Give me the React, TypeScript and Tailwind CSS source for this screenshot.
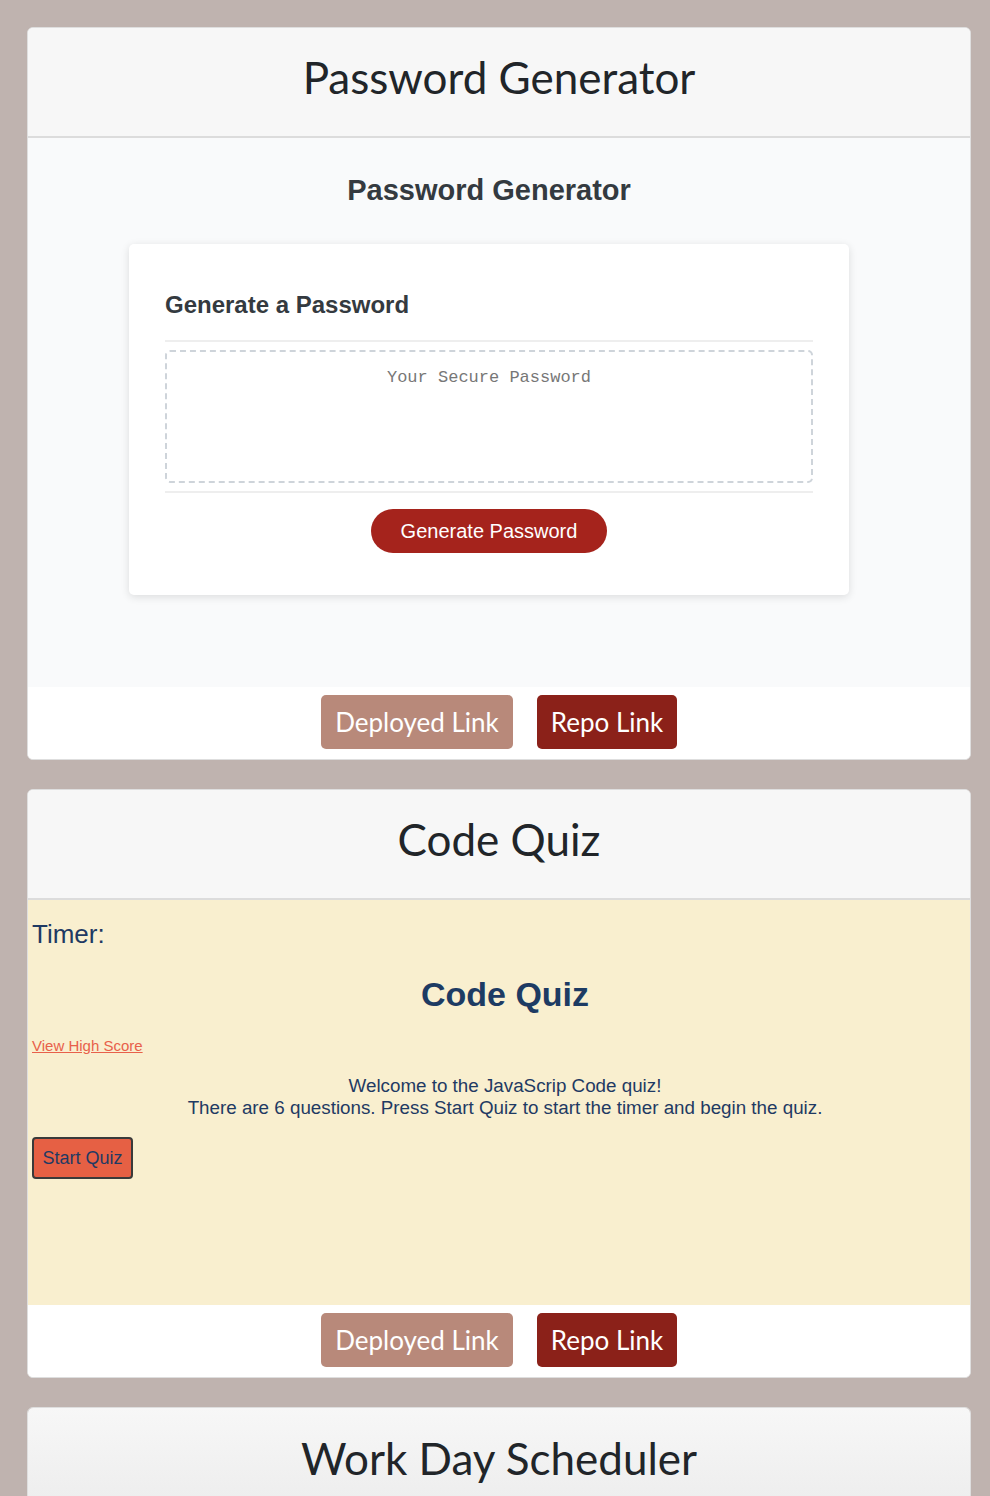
import React from "react";

const links = (
  <div className="flex items-center justify-center gap-6 bg-white pt-2 pb-[10px]">
    <a className="flex h-[54px] w-[192px] items-center justify-center rounded-[5px] bg-[#b8897a] text-[26px] text-white">
      Deployed Link
    </a>
    <a className="flex h-[54px] w-[140px] items-center justify-center rounded-[5px] bg-[#8b2119] text-[26px] text-white">
      Repo Link
    </a>
  </div>
);

function CardHeader({ title }: { title: string }) {
  return (
    <div className="flex h-[110px] items-center justify-center border-b-2 border-[#dcdcdc] bg-[#f7f7f7] pb-[10px]">
      <h2 className="text-[44px] text-[#212529]">{title}</h2>
    </div>
  );
}

function PasswordShot() {
  const helv = { fontFamily: '"Liberation Sans", Arial, sans-serif' };
  return (
    <div className="h-[549px] bg-[#f9fafb] pt-[34px] pr-[20px]" style={helv}>
      <h1 className="text-center text-[29px] font-bold text-[#343a40] leading-[36px]">
        Password Generator
      </h1>
      <div className="mx-auto mt-[36px] w-[720px] rounded-[5px] bg-white px-9 pt-[46px] pb-[42px] shadow-[0_2px_8px_rgba(0,0,0,0.12)]">
        <h2 className="text-[24px] font-bold leading-[30px] text-[#343a40]">Generate a Password</h2>
        <div className="mt-[20px] border-t-2 border-[#eeeeee]" />
        <div
          className="mt-2 flex h-[133px] justify-center rounded-[5px] border-2 border-dashed border-[#ced4da] pt-[13px] text-[17px] text-[#777]"
          style={{ fontFamily: '"Liberation Mono", "Courier New", monospace' }}
        >
          Your Secure Password
        </div>
        <div className="mt-2 border-t-2 border-[#eeeeee]" />
        <div className="mt-[16px] flex justify-center">
          <button className="h-[44px] w-[236px] rounded-full bg-[#a5231c] text-[20px] text-white">
            Generate Password
          </button>
        </div>
      </div>
    </div>
  );
}

function QuizShot() {
  return (
    <div
      className="h-[405px] bg-[#f9efcf] px-1 pt-[19px] text-[#1f3a63]"
      style={{ fontFamily: '"Liberation Sans", Arial, sans-serif' }}
    >
      <div className="text-[26px] leading-[30px]">Timer:</div>
      <h1 className="mt-[25px] text-center text-[34px] font-bold leading-[40px] pl-[12px] text-[#1d3b63]">
        Code Quiz
      </h1>
      <a className="mt-[23px] block text-[15px] leading-[18px] text-[#e8604a] underline">View High Score</a>
      <p className="mt-[20px] text-center text-[18.8px] leading-[22px] pl-[12px]">
        Welcome to the JavaScrip Code quiz!
        <br />
        There are 6 questions. Press Start Quiz to start the timer and begin the quiz.
      </p>
      <button className="mt-[18px] h-[42px] w-[101px] rounded-[4px] border-2 border-[#3a3a3a] bg-[#e66044] text-[18px] text-[#1f3a63]">
        Start Quiz
      </button>
    </div>
  );
}

export default function App() {
  return (
    <div
      className="min-h-[1496px] bg-[#bfb3af] pl-[27px] pr-[19px] pt-[27px]"
      style={{ fontFamily: 'Lato, "Noto Sans", sans-serif' }}
    >
      <div className="flex flex-col gap-[29px]">
        <div className="overflow-hidden rounded-[6px] border border-[#dedede] bg-white">
          <CardHeader title="Password Generator" />
          <PasswordShot />
          {links}
        </div>
        <div className="overflow-hidden rounded-[6px] border border-[#dedede] bg-white">
          <CardHeader title="Code Quiz" />
          <QuizShot />
          {links}
        </div>
        <div className="overflow-hidden rounded-[6px] border border-[#dedede] bg-white">
          <div className="flex h-[110px] items-center justify-center bg-gradient-to-b from-[#f7f7f7] to-[#ececec] pb-[10px]">
            <h2 className="text-[44px] text-[#212529]">Work Day Scheduler</h2>
          </div>
        </div>
      </div>
    </div>
  );
}
